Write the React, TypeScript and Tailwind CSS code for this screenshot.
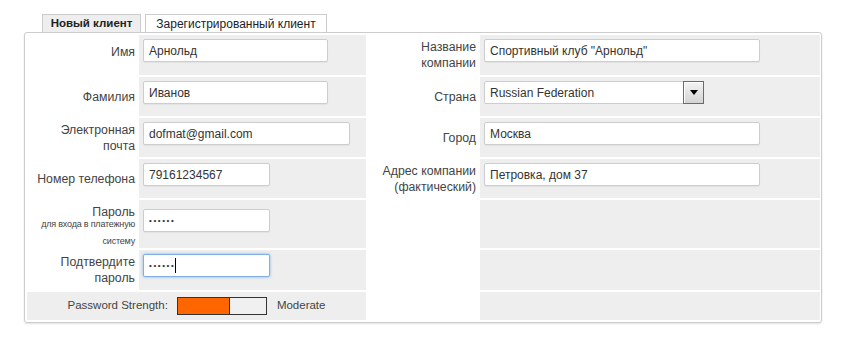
import React from "react";

const font = "font-['Liberation_Sans',Arial,sans-serif]";

function Label({ children, className = "" }: { children?: React.ReactNode; className?: string }) {
  return (
    <div className={`flex items-center justify-end pr-[2px] text-right text-[12.3px] leading-[16px] text-[#444] bg-white ${className}`}>
      {children}
    </div>
  );
}

function Cell({ children, className = "" }: { children?: React.ReactNode; className?: string }) {
  return <div className={`bg-[#eeeeee] pl-[4px] pt-[4px] ${className}`}>{children}</div>;
}

function Field({
  value,
  className = "",
  focused = false,
  secret = false,
}: {
  value: string;
  className?: string;
  focused?: boolean;
  secret?: boolean;
}) {
  const border = focused
    ? "border-[#7fb0e3] shadow-[0_0_3px_rgba(82,152,230,0.7)]"
    : "border-[#cdcdcd] shadow-[0_1px_1px_rgba(0,0,0,0.05)]";
  return (
    <div className={`h-[23px] flex items-center px-[5px] bg-white border rounded-[2px] text-[12px] text-[#333] ${border} ${className}`}>
      {secret ? <span className="text-[8px] tracking-[1.6px] text-[#333]">{value}</span> : value}
      {focused && <span className="w-px h-[15px] bg-black" />}
    </div>
  );
}

export default function App() {
  return (
    <div className={`${font} bg-white w-[843px] h-[364px] pl-[24px] pt-[14px]`}>
      {/* Tabs */}
      <div className="flex gap-[4px] ml-[18px] h-[18px]">
        <div className="w-[99px] flex items-center justify-center bg-[#eeeeee] border border-b-0 border-[#cccccc] text-[11.5px] font-bold text-[#222]">
          Новый клиент
        </div>
        <div className="w-[182px] flex items-center justify-center bg-white border border-b-0 border-[#cccccc] text-[12px] text-[#222]">
          Зарегистрированный клиент
        </div>
      </div>

      {/* Panel */}
      <div className="w-[798px] border border-[#cccccc] rounded-[3px] pl-[2px] pr-[1px] py-[2px] shadow-[0_1px_2px_rgba(0,0,0,0.12)]">
        <div className="grid grid-cols-[110px_227px_110px_340px] grid-rows-[40px_39px_39px_39px_48px_40px_28px] gap-[2px]">
          {/* row 1 */}
          <Label className="pb-[6px]">Имя</Label>
          <Cell>
            <Field value="Арнольд" className="w-[185px]" />
          </Cell>
          <Label>
            Название
            <br />
            компании
          </Label>
          <Cell className="pl-[3px]">
            <Field value='Спортивный клуб "Арнольд"' className="w-[276px]" />
          </Cell>

          {/* row 2 */}
          <Label>Фамилия</Label>
          <Cell>
            <Field value="Иванов" className="w-[185px]" />
          </Cell>
          <Label>Страна</Label>
          <Cell className="pl-[3px]">
            <div className="w-[220px] h-[23px] flex bg-white border border-[#cdcdcd] rounded-[2px]">
              <div className="flex-1 flex items-center px-[5px] text-[12px] text-[#333]">Russian Federation</div>
              <div className="w-[21px] -my-px -mr-px border border-[#6b6b6b] bg-gradient-to-b from-[#f4f4f4] to-[#d4d4d4] shadow-[inset_1px_1px_0_#ffffff] flex items-center justify-center">
                <svg width="8" height="5" viewBox="0 0 8 5">
                  <path d="M0 0h8L4 5z" fill="#000" />
                </svg>
              </div>
            </div>
          </Cell>

          {/* row 3 */}
          <Label>
            Электронная
            <br />
            почта
          </Label>
          <Cell>
            <Field value="dofmat@gmail.com" className="w-[207px]" />
          </Cell>
          <Label>Город</Label>
          <Cell className="pl-[3px]">
            <Field value="Москва" className="w-[276px]" />
          </Cell>

          {/* row 4 */}
          <Label>Номер телефона</Label>
          <Cell>
            <Field value="79161234567" className="w-[127px]" />
          </Cell>
          <Label>
            Адрес компании
            <br />
            (фактический)
          </Label>
          <Cell className="pl-[3px]">
            <Field value="Петровка, дом 37" className="w-[276px]" />
          </Cell>

          {/* row 5 */}
          <div className="bg-white pr-[2px] pt-[5px] text-right text-[#444]">
            <div className="text-[12.3px] leading-[14px]">Пароль</div>
            <div className="text-[9px] leading-[17px] -mt-[3px] tracking-[-0.2px]">
              для входа в платежную
              <br />
              систему
            </div>
          </div>
          <Cell className="pt-[9px]">
            <Field value="••••••" secret className="w-[127px]" />
          </Cell>
          <Label />
          <Cell />

          {/* row 6 */}
          <Label>
            Подтвердите
            <br />
            пароль
          </Label>
          <Cell>
            <Field value="••••••" secret focused className="w-[127px]" />
          </Cell>
          <Label />
          <Cell />

          {/* row 7 */}
          <div className="col-span-2 bg-[#eeeeee] flex items-center justify-center text-[11.5px] text-[#444]">
            <span>Password Strength:</span>
            <div className="ml-[9px] w-[90px] h-[18px] flex border border-[#333]">
              <div className="w-[52px] bg-[#ff6600] border-r border-[#333]" />
              <div className="flex-1 bg-[#f0f0f0]" />
            </div>
            <span className="ml-[10px]">Moderate</span>
          </div>
          <Label />
          <Cell />
        </div>
      </div>
    </div>
  );
}
